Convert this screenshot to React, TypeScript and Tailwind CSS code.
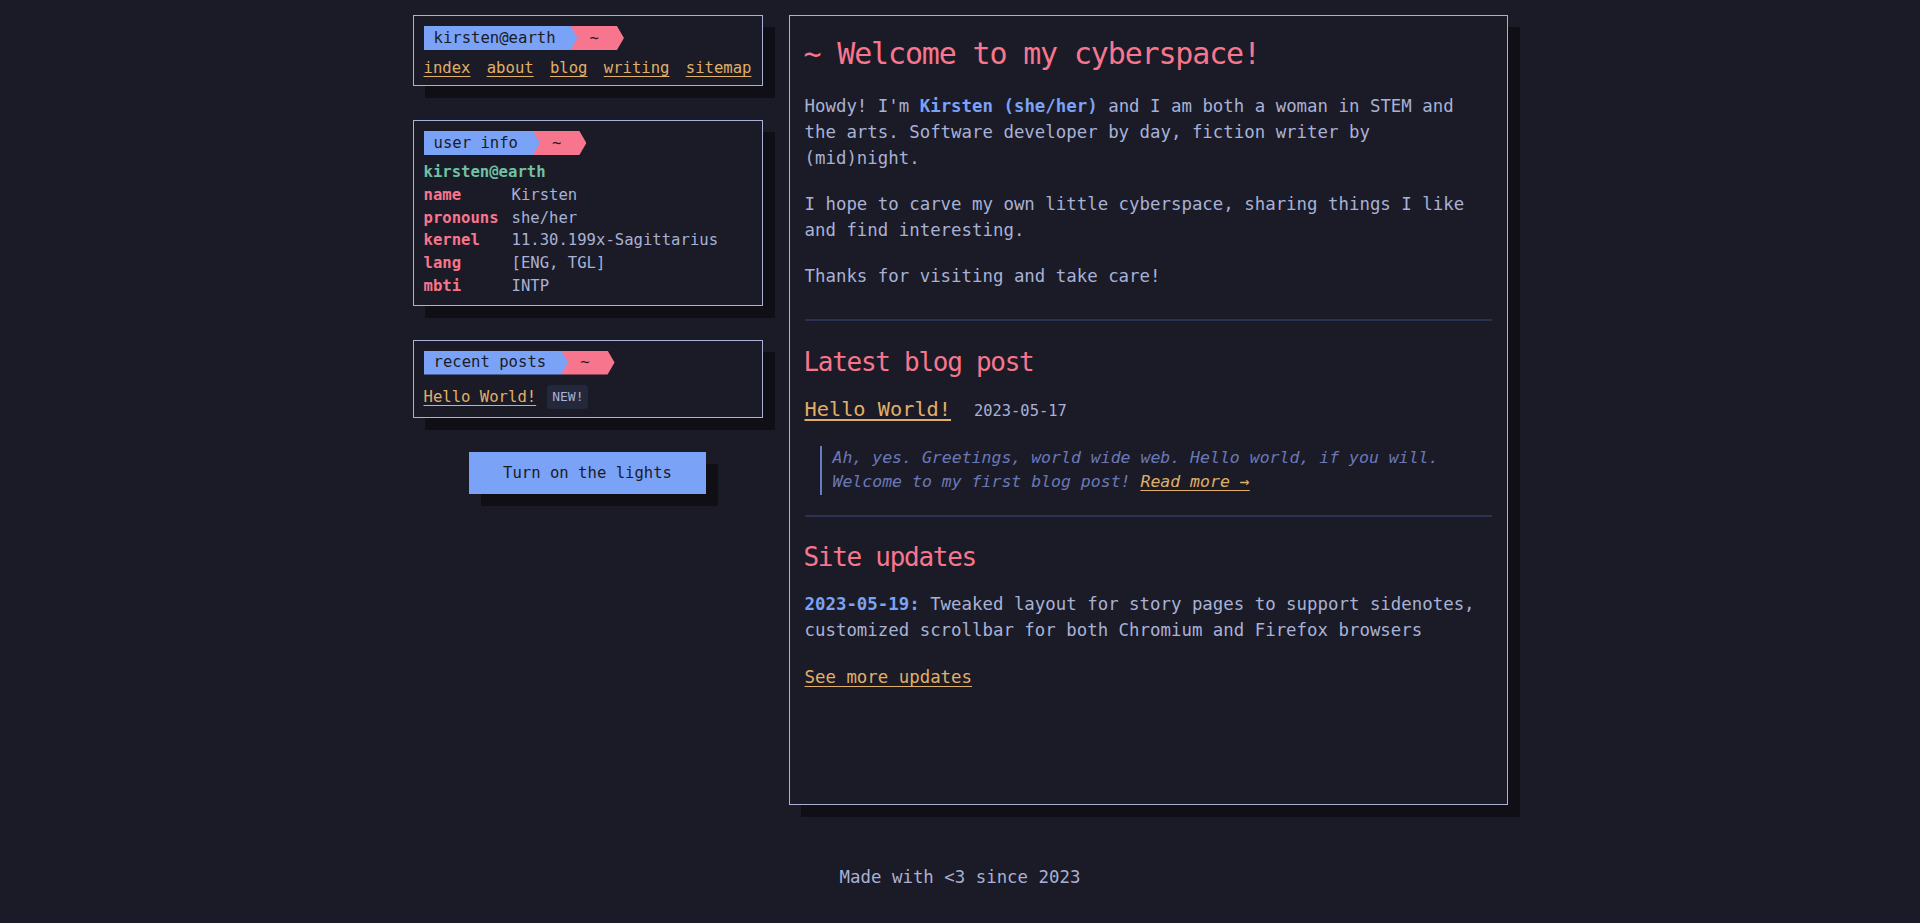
import React from "react";

const BLUE_CLIP =
  "[clip-path:polygon(0_0,calc(100%_-_7px)_0,100%_50%,calc(100%_-_7px)_100%,0_100%)]";

function Tag({ label }: { label: string }) {
  return (
    <div className="flex h-[24px] text-[#1a1b26]">
      <span
        className={`relative z-10 flex items-center bg-[#7aa2f7] pl-[10px] pr-[22px] pt-[1px] ${BLUE_CLIP}`}
      >
        {label}
      </span>
      <span
        className={`-ml-[7px] flex items-center bg-[#f7768e] pl-[19px] pr-[25px] pt-[1px] ${BLUE_CLIP}`}
      >
        ~
      </span>
    </div>
  );
}

const box =
  "border border-[#a9b1d6] px-[10px] pt-[10px] shadow-[12px_12px_0_#0f0f15] bg-[#1a1b26]";

const link = "text-[#e0af68] underline underline-offset-[3px]";

export default function App() {
  const info: [string, string][] = [
    ["name", "Kirsten"],
    ["pronouns", "she/her"],
    ["kernel", "11.30.199x-Sagittarius"],
    ["lang", "[ENG, TGL]"],
    ["mbti", "INTP"],
  ];
  return (
    <div className="min-h-screen bg-[#1a1b26] pt-[15px] font-['DejaVu_Sans_Mono',monospace] text-[#a9b1d6]">
      <div className="mx-auto flex w-[1095px] items-start gap-[26px]">
        {/* Sidebar */}
        <aside className="flex w-[350px] flex-col gap-[34px] text-[15.6px]">
          <section className={`${box} pb-[5px]`}>
            <Tag label="kirsten@earth" />
            <nav className="mt-[6px] flex h-[24px] items-center justify-between leading-[24px]">
              <a className={link}>index</a>
              <a className={link}>about</a>
              <a className={link}>blog</a>
              <a className={link}>writing</a>
              <a className={link}>sitemap</a>
            </nav>
          </section>

          <section className={`${box} pb-[7px]`}>
            <Tag label="user info" />
            <div className="mt-[6px] leading-[22.75px]">
              <div className="font-bold text-[#6fc2a3]">kirsten@earth</div>
              {info.map(([k, v]) => (
                <div key={k} className="grid grid-cols-[88px_1fr]">
                  <span className="font-bold text-[#f7768e]">{k}</span>
                  <span>{v}</span>
                </div>
              ))}
            </div>
          </section>

          <section className={`${box} pb-[8px]`}>
            <Tag label="recent posts" />
            <div className="mt-[10px] flex h-[24px] items-center gap-[11px] leading-[24px]">
              <a className={link}>Hello World!</a>
              <span className="flex h-[24px] items-center rounded-[4px] bg-[#24283b] px-[5px] text-[13px] text-[#a9b1d6]">
                NEW!
              </span>
            </div>
          </section>

          <div className="flex justify-center">
            <button className="h-[42px] bg-[#7aa2f7] px-[34px] leading-[42px] text-[#1a1b26] shadow-[12px_12px_0_#0f0f15]">
              Turn on the lights
            </button>
          </div>
        </aside>

        {/* Main */}
        <main className="h-[790px] w-[719px] border border-[#a9b1d6] bg-[#1a1b26] px-[15px] pt-[21px] text-[17.4px] leading-[26.1px] shadow-[12px_12px_0_#0f0f15]">
          <h1 className="-ml-[1px] text-[30px] leading-[34px] tracking-[-1.16px] text-[#f7768e]">
            ~ Welcome to my cyberspace!
          </h1>
          <p className="mt-[21.5px]">
            Howdy! I'm{" "}
            <span className="font-bold text-[#7aa2f7]">Kirsten (she/her)</span> and I
            am both a woman in STEM and the arts. Software developer by day, fiction
            writer by (mid)night.
          </p>
          <p className="mt-[20px]">
            I hope to carve my own little cyberspace, sharing things I like and find
            interesting.
          </p>
          <p className="mt-[20px]">Thanks for visiting and take care!</p>

          <div className="mt-[30px] h-[2px] bg-[#2b3150]" />

          <h2 className="-ml-[1px] mt-[27px] text-[26px] leading-[28px] tracking-[-1.28px] text-[#f7768e]">
            Latest blog post
          </h2>
          <div className="mt-[18px] flex items-baseline text-[20.3px] leading-[30.45px]">
            <a className={link}>Hello World!</a>
            <span className="ml-[23px] text-[15.4px]">2023-05-17</span>
          </div>
          <blockquote className="ml-[15px] mt-[19px] border-l-2 border-[#6b7bc0] pl-[11px] text-[16.5px] italic leading-[24.75px] text-[#6b78b8]">
            Ah, yes. Greetings, world wide web. Hello world, if you will. Welcome to my
            first blog post! <a className={link}>Read more →</a>
          </blockquote>

          <div className="mt-[20px] h-[2px] bg-[#2b3150]" />

          <h2 className="-ml-[1px] mt-[26px] text-[26px] leading-[28px] tracking-[-1.28px] text-[#f7768e]">
            Site updates
          </h2>
          <p className="mt-[20px]">
            <span className="font-bold text-[#7aa2f7]">2023-05-19:</span> Tweaked
            layout for story pages to support sidenotes, customized scrollbar for both
            Chromium and Firefox browsers
          </p>
          <p className="mt-[21px]">
            <a className={link}>See more updates</a>
          </p>
        </main>
      </div>

      <footer className="mt-[59px] text-center text-[17.4px] leading-[26.1px]">
        Made with &lt;3 since 2023
      </footer>
    </div>
  );
}
